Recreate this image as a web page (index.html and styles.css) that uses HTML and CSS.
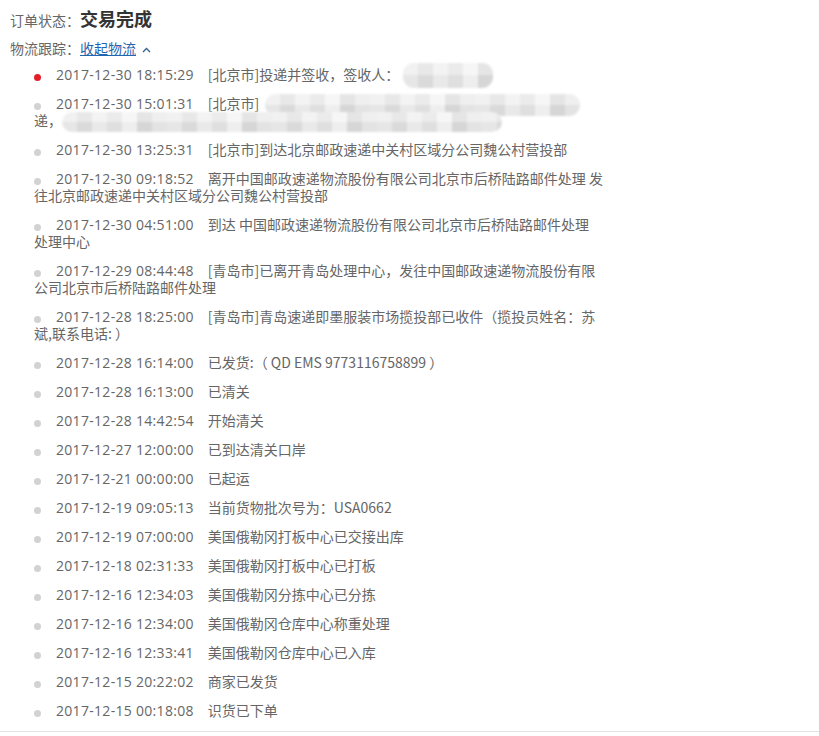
FILE: index.html
```html
<!DOCTYPE html>
<html lang="zh-CN">

<head>
    <meta charset="UTF-8">
    <meta name="viewport" content="width=device-width, initial-scale=1.0">
    <title>订单跟踪</title>
    <link rel="stylesheet" href="styles.css">
</head>

<body>
    <div class="order-box">
        <div class="order-status">订单状态：<strong>交易完成</strong></div>
        <div class="track-head">
            物流跟踪：<a href="#" class="track-toggle">收起物流</a>
            <svg class="chevron" width="9" height="6" viewBox="0 0 9 6">
                <polyline points="1,5 4.5,1.5 8,5" fill="none" stroke="#2d5f90" stroke-width="1.3" />
            </svg>
        </div>

        <!-- tracking list -->
        <ul class="track-list">
            <li><i class="dot dot-active"></i><span class="time">2017-12-30 18:15:29</span>[北京市]投递并签收，签收人：<span class="mask mask-sm"></span></li>
            <li><i class="dot"></i><span class="time">2017-12-30 15:01:31</span>[北京市]<span class="mask mask-lg"></span><br>递，<span class="mask mask-xl"></span></li>
            <li><i class="dot"></i><span class="time">2017-12-30 13:25:31</span>[北京市]到达北京邮政速递中关村区域分公司魏公村营投部</li>
            <li><i class="dot"></i><span class="time">2017-12-30 09:18:52</span>离开中国邮政速递物流股份有限公司北京市后桥陆路邮件处理 发往北京邮政速递中关村区域分公司魏公村营投部</li>
            <li><i class="dot"></i><span class="time">2017-12-30 04:51:00</span>到达 中国邮政速递物流股份有限公司北京市后桥陆路邮件处理<br>处理中心</li>
            <li><i class="dot"></i><span class="time">2017-12-29 08:44:48</span>[青岛市]已离开青岛处理中心，发往中国邮政速递物流股份有限公司北京市后桥陆路邮件处理</li>
            <li><i class="dot"></i><span class="time">2017-12-28 18:25:00</span>[青岛市]青岛速递即墨服装市场揽投部已收件（揽投员姓名：苏斌,联系电话: ）</li>
            <li><i class="dot"></i><span class="time">2017-12-28 16:14:00</span>已发货:（ QD EMS 9773116758899 ）</li>
            <li><i class="dot"></i><span class="time">2017-12-28 16:13:00</span>已清关</li>
            <li><i class="dot"></i><span class="time">2017-12-28 14:42:54</span>开始清关</li>
            <li><i class="dot"></i><span class="time">2017-12-27 12:00:00</span>已到达清关口岸</li>
            <li><i class="dot"></i><span class="time">2017-12-21 00:00:00</span>已起运</li>
            <li><i class="dot"></i><span class="time">2017-12-19 09:05:13</span>当前货物批次号为：USA0662</li>
            <li><i class="dot"></i><span class="time">2017-12-19 07:00:00</span>美国俄勒冈打板中心已交接出库</li>
            <li><i class="dot"></i><span class="time">2017-12-18 02:31:33</span>美国俄勒冈打板中心已打板</li>
            <li><i class="dot"></i><span class="time">2017-12-16 12:34:03</span>美国俄勒冈分拣中心已分拣</li>
            <li><i class="dot"></i><span class="time">2017-12-16 12:34:00</span>美国俄勒冈仓库中心称重处理</li>
            <li><i class="dot"></i><span class="time">2017-12-16 12:33:41</span>美国俄勒冈仓库中心已入库</li>
            <li><i class="dot"></i><span class="time">2017-12-15 20:22:02</span>商家已发货</li>
            <li><i class="dot"></i><span class="time">2017-12-15 00:18:08</span>识货已下单</li>
        </ul>
    </div>
</body>

</html>
```

FILE: styles.css
```css
html,
body {
    margin: 0;
    background: #fff;
}

body {
    font-family: "Noto Sans CJK SC", "Microsoft YaHei", sans-serif;
    font-size: 14px;
    color: #666;
}

.order-box {
    padding: 5px 10px 0;
    border-bottom: 1px solid #e3e3e3;
}

.order-status {
    line-height: 26px;
}

.order-status strong {
    font-size: 18px;
    color: #333;
}

.track-head {
    margin-top: 5px;
    line-height: 20px;
}

.track-toggle {
    color: #1f65b0;
    text-decoration: underline;
}

.chevron {
    margin-left: 3px;
    vertical-align: 1px;
}

.track-list {
    list-style: none;
    margin: 2px 0 0;
    padding: 0 0 6px 24px;
    width: 573px;
}

.track-list li {
    padding: 6px 0;
    line-height: 17px;
}

.dot {
    display: inline-block;
    width: 7px;
    height: 7px;
    border-radius: 50%;
    background: #d2d2d2;
    margin-right: 15px;
    vertical-align: middle;
    position: relative;
    top: 1px;
}

.dot-active {
    background: #e3202a;
}

.time {
    display: inline-block;
    height: 17px;
    line-height: 17px;
    vertical-align: top;
    font-family: "Open Sans", sans-serif;
    letter-spacing: .3px;
    margin-right: 14px;
}

/* blurred private info, drawn over the line */
.mask {
    display: inline-block;
    position: relative;
    height: 8px;
    vertical-align: middle;
}

.mask::before {
    content: "";
    position: absolute;
    left: 0;
    right: 0;
    top: -7px;
    bottom: -7px;
    border-radius: 11px;
    background-color: #e8e8e8;
    background-image:
        linear-gradient(180deg, rgba(255, 255, 255, .3) 0 50%, rgba(0, 0, 0, .02) 50% 100%),
        linear-gradient(90deg, #ebebeb 0 15px, #dedede 15px 30px, #eeeeee 30px 45px, #e3e3e3 45px 60px, #f3f3f3 60px 75px, #dadada 75px 90px, #e8e8e8 90px 105px);
    background-size: 100% 100%, 105px 100%;
    filter: blur(1.2px);
}

.mask-sm {
    width: 90px;
    margin-left: 4px;
}

.mask-sm::before {
    top: -9px;
    bottom: -8px;
}

.mask-lg {
    width: 315px;
    margin-left: 6px;
}

.mask-xl {
    width: 440px;
}

.mask-xl::before {
    top: -6px;
    bottom: -6px;
}
```
